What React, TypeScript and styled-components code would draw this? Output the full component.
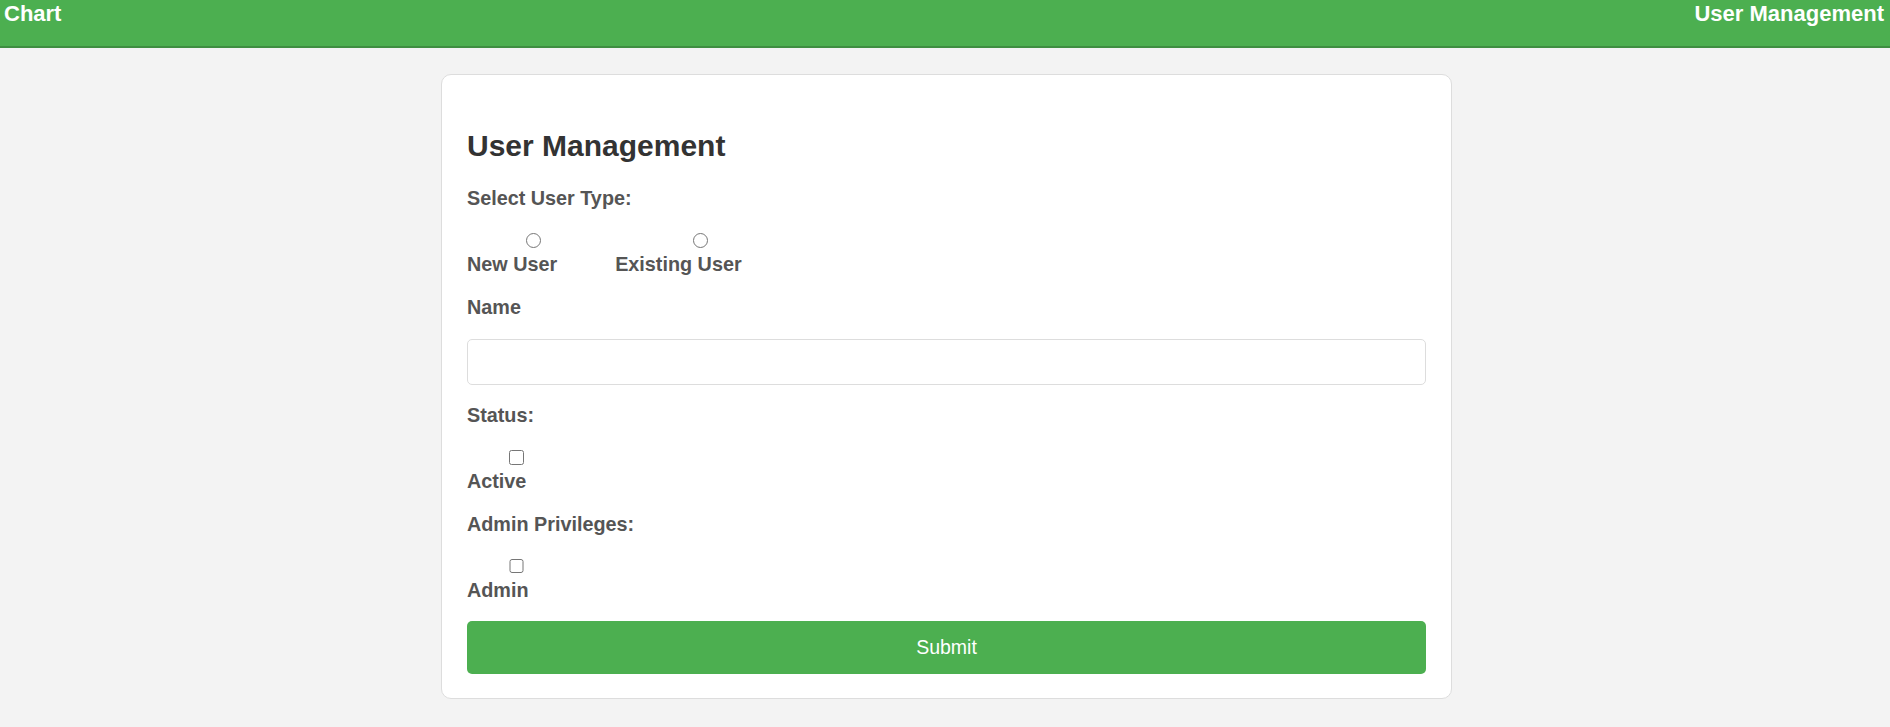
import styled, { createGlobalStyle } from 'styled-components';

const GlobalStyle = createGlobalStyle`
  html, body {
    margin: 0;
    padding: 0;
    background: #f3f3f3;
    font-family: "Liberation Sans", Arial, sans-serif;
  }
  * {
    box-sizing: border-box;
  }
`;

export default function App() {
  return (
    <>
      <GlobalStyle />
      <Header>
        <NavLink>Chart</NavLink>
        <NavLink>User Management</NavLink>
      </Header>
      <Main>
        <Card>
          <Title>User Management</Title>

          <FormGroup>
            <SectionLabel>Select User Type:</SectionLabel>
            <OptionRow>
              <Option>
                <Radio type="radio" name="userType" indent={59} />
                <OptionText>New User</OptionText>
              </Option>
              <Option>
                <Radio type="radio" name="userType" indent={78} />
                <OptionText>Existing User</OptionText>
              </Option>
            </OptionRow>
          </FormGroup>

          <FormGroup>
            <SectionLabel>Name</SectionLabel>
            <TextInput type="text" />
          </FormGroup>

          <FormGroup>
            <SectionLabel>Status:</SectionLabel>
            <Option>
              <Checkbox type="checkbox" indent={42} />
              <OptionText>Active</OptionText>
            </Option>
          </FormGroup>

          <FormGroup>
            <SectionLabel>Admin Privileges:</SectionLabel>
            <Option>
              <Checkbox type="checkbox" indent={42} />
              <OptionText>Admin</OptionText>
            </Option>
          </FormGroup>

          <SubmitButton type="button">Submit</SubmitButton>
        </Card>
      </Main>
    </>
  );
}

const Header = styled.header`
  display: flex;
  justify-content: space-between;
  align-items: flex-start;
  height: 48px;
  padding: 2px 6px 0 4px;
  background: #4caf50;
  border-bottom: 2px solid #3e8e41;
`;

const NavLink = styled.a`
  color: #fff;
  font-size: 22px;
  font-weight: bold;
  line-height: 23px;
  text-decoration: none;
  cursor: pointer;
`;

const Main = styled.main`
  padding: 26px 0 28px 3px;
`;

const Card = styled.div`
  width: 1011px;
  margin: 0 auto;
  padding: 0 25px 24px;
  background: #fff;
  border: 1px solid #ddd;
  border-radius: 10px;
`;

const Title = styled.h2`
  margin: 53px 0 24px;
  font-size: 30px;
  line-height: 35px;
  color: #333;
`;

const FormGroup = styled.div`
  margin-bottom: 19.5px;
`;

const SectionLabel = styled.label`
  display: block;
  margin-bottom: 20px;
  font-size: 19.8px;
  font-weight: bold;
  line-height: 23px;
  color: #555;
`;

const OptionRow = styled.div`
  display: flex;
  gap: 58px;
`;

const Option = styled.label`
  display: inline-flex;
  flex-direction: column;
  align-items: flex-start;
  cursor: pointer;
`;

const Radio = styled.input<{ indent: number }>`
  width: 14.5px;
  height: 14.5px;
  margin: 3px 0 5.5px ${(p) => p.indent}px;
`;

const Checkbox = styled(Radio)``;

const OptionText = styled.span`
  font-size: 19.8px;
  font-weight: bold;
  line-height: 23px;
  color: #555;
`;

const TextInput = styled.input`
  display: block;
  width: 100%;
  height: 46px;
  padding: 0 12px;
  border: 1px solid #ddd;
  border-radius: 5px;
  font-size: 19.5px;
  font-family: inherit;
  outline: none;
`;

const SubmitButton = styled.button`
  display: block;
  width: 100%;
  height: 53px;
  border: none;
  border-radius: 5px;
  background: #4caf50;
  color: #fff;
  font-family: inherit;
  font-size: 19.5px;
  cursor: pointer;
`;
